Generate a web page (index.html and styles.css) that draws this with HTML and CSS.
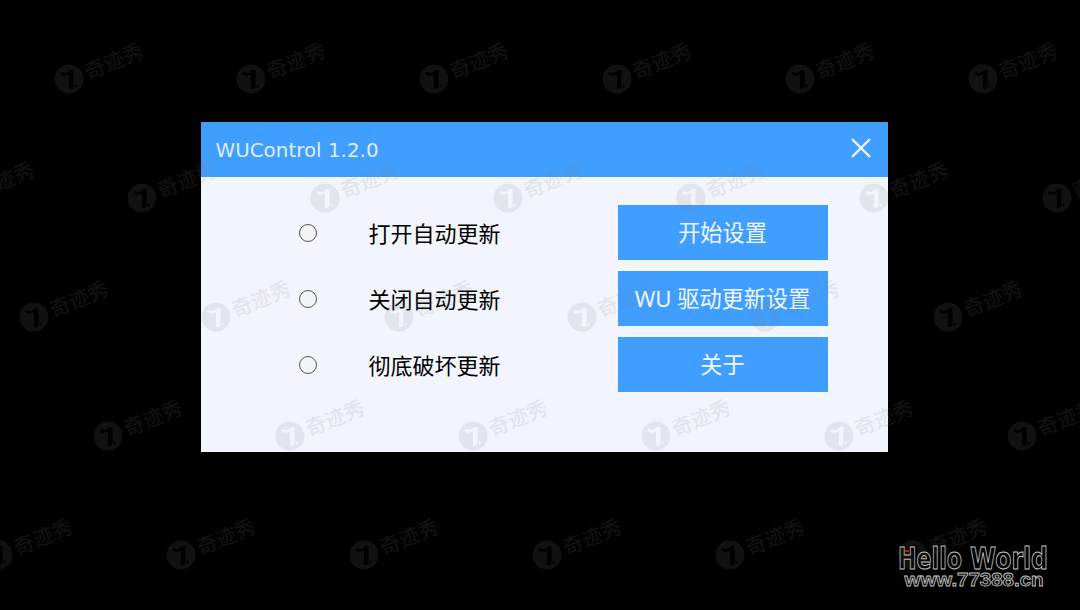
FILE: index.html
```html
<!DOCTYPE html>
<html lang="zh-CN">
<head>
  <meta charset="UTF-8" />
  <meta name="viewport" content="width=device-width, initial-scale=1.0"/>
  <title>WUControl 1.2.0</title>
  <link rel="stylesheet" href="styles.css">
</head>
<body>
  <main class="window">
    <header class="titlebar">
      <h1>WUControl 1.2.0</h1>
      <button class="close" aria-label="关闭">
        <svg width="20" height="20" viewBox="0 0 20 20"><path d="M1 1L19 19M19 1L1 19"/></svg>
      </button>
    </header>
    <div class="content">
      <div class="options">
        <label><input type="radio" name="mode"><span>打开自动更新</span></label>
        <label><input type="radio" name="mode"><span>关闭自动更新</span></label>
        <label><input type="radio" name="mode"><span>彻底破坏更新</span></label>
      </div>
      <div class="actions">
        <button>开始设置</button>
        <button>WU 驱动更新设置</button>
        <button>关于</button>
      </div>
    </div>
  </main>

  <svg class="signature" width="160" height="50" viewBox="0 0 160 50">
    <text class="hello" x="4" y="28.500" textLength="64" lengthAdjust="spacingAndGlyphs">Hello</text>
    <text class="hello" x="76" y="28.500" textLength="78" lengthAdjust="spacingAndGlyphs">World</text>
    <rect class="dot" x="11" y="10" width="4" height="2"/>
    <text class="site" x="10.500" y="45.500" textLength="139" lengthAdjust="spacingAndGlyphs">www.77388.cn</text>
  </svg>

  <div class="watermarks" id="watermarks"></div>

  <script>
    // centre of the first mark in each row
    const rows = [
      { x: 68.5, y: 78.5 },
      { x: -40.5, y: 197.5 },
      { x: 33.5, y: 316.5 },
      { x: 107.5, y: 435.5 },
      { x: -2, y: 554.5 }
    ];
    const stepX = 182.9;
    const layer = document.getElementById('watermarks');

    rows.forEach(row => {
      for (let x = row.x; x < 1090; x += stepX) {
        layer.innerHTML += `
          <svg class="mark" style="left:${x - 15}px;top:${row.y - 42}px" width="96" height="58" viewBox="-15 -42 96 58">
            <path fill-rule="evenodd" d="M-14.500 0a14.500 14.500 0 1 0 29 0a14.500 14.500 0 1 0-29 0ZM-9-5.500L-7-7L-4.500-6L-1.500-6.500L1-9H4.500V8L3 10L-.5 9.500L0 6V-4.500L-5-3L-7.500-4ZM6 5.500L8 6.500L6.500 9L5.500 8Z"/>
            <text x="19" y="0.500" transform="rotate(-22 19 0)">奇迹秀</text>
          </svg>`;
      }
    });
  </script>
</body>
</html>
```
FILE: styles.css
```css
* { box-sizing: border-box; }
body {
  position: relative;
  margin: 0;
  height: 610px;
  padding: 122.4px 0 0 201px;
  overflow: hidden;
  background: #000;
  font-family: "Noto Sans", "Noto Sans CJK SC", sans-serif;
}
button {
  border: 0;
  padding: 0;
  font-family: inherit;
  cursor: pointer;
}
.window {
  width: 687.4px;
  height: 330px;
  background: #f2f5fd;
}
.titlebar {
  display: flex;
  justify-content: space-between;
  align-items: center;
  height: 55px;
  padding: 0 17.4px 0 14.5px;
  background: #409eff;
}
.titlebar h1 {
  margin: 0;
  padding-top: 2px;
  color: #dfecfc;
  font-family: "DejaVu Sans", sans-serif;
  font-size: 19.9px;
  font-weight: normal;
  line-height: 24px;
}
.close {
  display: flex;
  padding-bottom: 4px;
  background: none;
}
.close path {
  fill: none;
  stroke: #f2f5fd;
  stroke-width: 2.4;
}
.content {
  display: flex;
  justify-content: space-between;
  padding: 27.5px 60.4px 0 97.5px;
}
.options, .actions {
  display: grid;
  grid-auto-rows: 55px;
  gap: 11px;
}
.options label {
  display: flex;
  align-items: center;
  gap: 52px;
  color: #000;
  font-size: 22px;
}
.options span {
  padding-top: 1px;
  line-height: 28px;
}
.options input {
  appearance: none;
  width: 18px;
  height: 18px;
  margin: 1px 0 0;
  border: 1.5px solid #555;
  border-radius: 50%;
  background: #f3f3f3;
}
.options input:checked {
  background: radial-gradient(#409eff 45%, #f3f3f3 50%);
}
.actions { width: 210px; }
.actions button {
  padding: 0 1px 2px 0;
  background: #409eff;
  color: #f2f7ff;
  font-size: 22.2px;
  white-space: nowrap;
}
.actions button:hover { background: #66b1ff; }
.signature {
  position: absolute;
  left: 894px;
  top: 540px;
}
.signature text {
  fill: #000;
  stroke: #c4c4c4;
}
.signature .hello {
  font-family: "DejaVu Sans", sans-serif;
  font-size: 30px;
  font-weight: bold;
  stroke-width: 1;
}
.signature .site {
  font-family: "Liberation Sans", sans-serif;
  font-size: 17.5px;
  font-weight: bold;
  stroke-width: 0.8;
}
.dot { fill: #e00; }
.watermarks {
  position: absolute;
  inset: 0;
  overflow: hidden;
  pointer-events: none;
}
.mark {
  position: absolute;
  overflow: visible;
  fill: #808080;
  opacity: 0.13;
}
.mark text {
  font-family: "Noto Sans CJK SC", sans-serif;
  font-size: 20.5px;
  font-weight: 500;
}
```
